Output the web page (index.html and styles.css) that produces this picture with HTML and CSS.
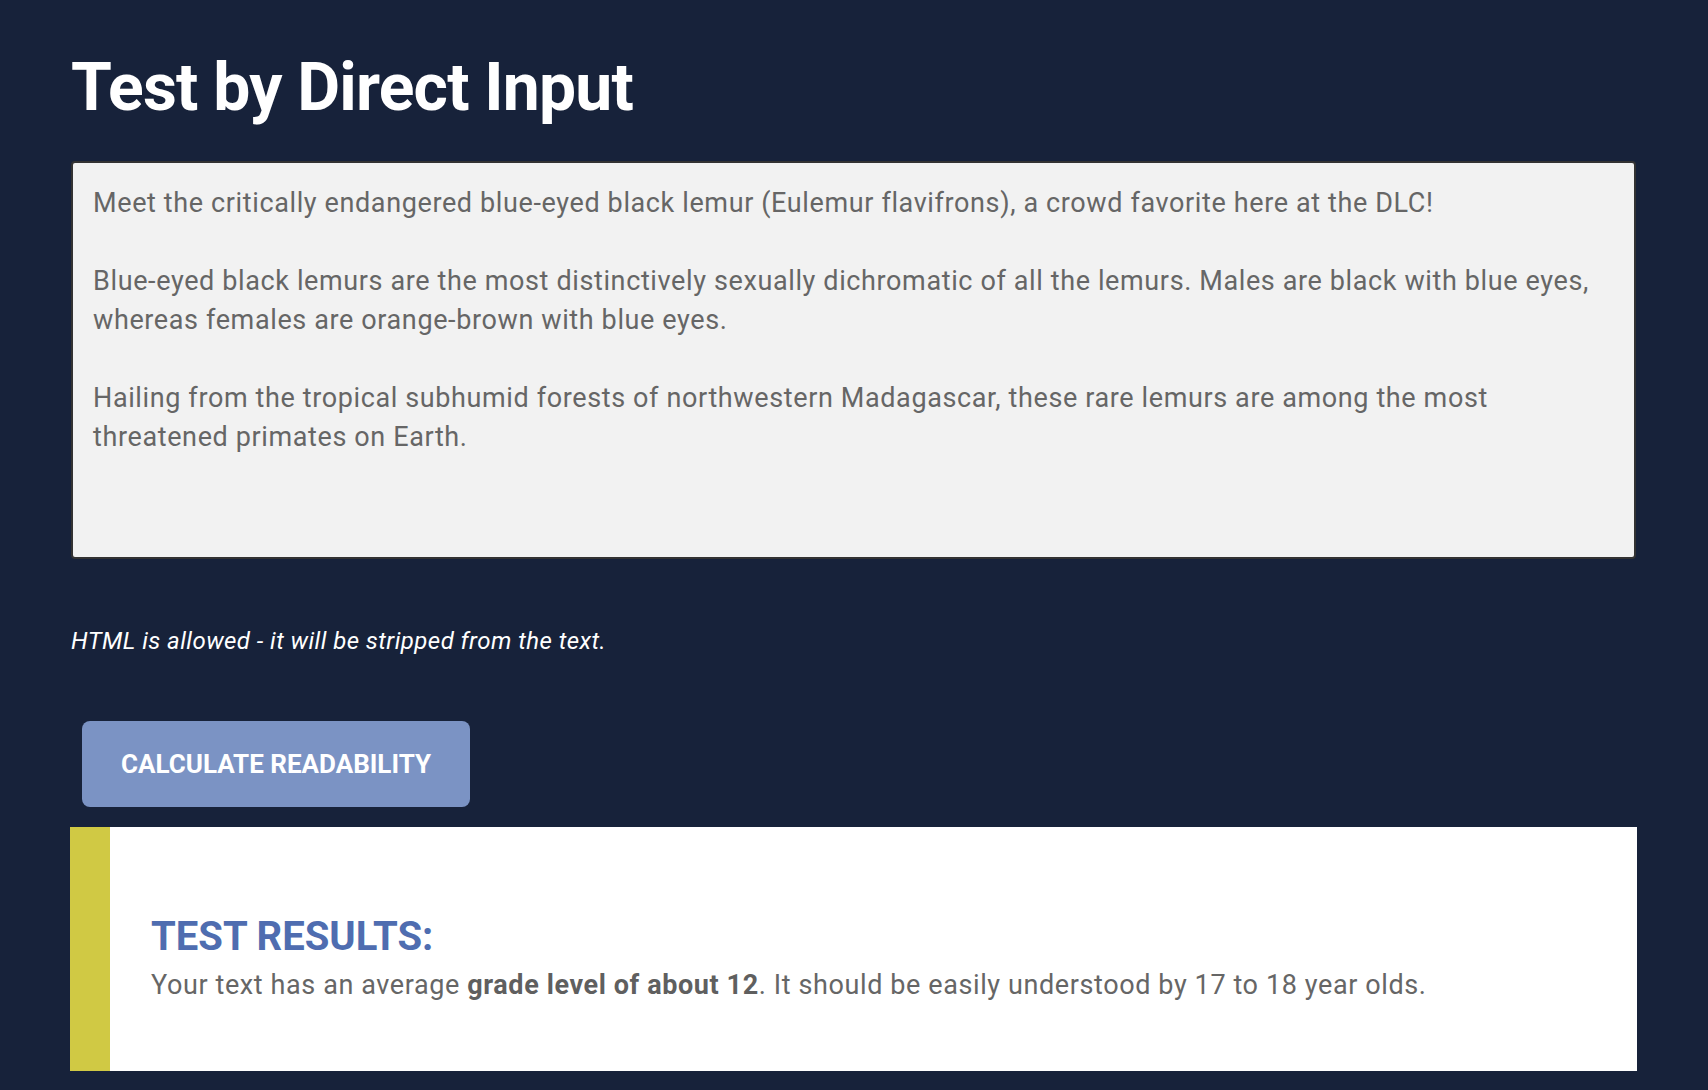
FILE: index.html
```html
<!DOCTYPE html>
<html lang="en">
<head>
<meta charset="utf-8">
<title>Test by Direct Input</title>
<link rel="stylesheet" href="styles.css">
</head>
<body>
<main class="page">
  <h1 class="title">Test by Direct Input</h1>
  <div class="input-box">
    <p>Meet the critically endangered blue-eyed black lemur (Eulemur flavifrons), a crowd favorite here at the DLC!</p>
    <p>Blue-eyed black lemurs are the most distinctively sexually dichromatic of all the lemurs. Males are black with blue eyes, whereas females are orange-brown with blue eyes.</p>
    <p>Hailing from the tropical subhumid forests of northwestern Madagascar, these rare lemurs are among the most threatened primates on Earth.</p>
  </div>
  <p class="note">HTML is allowed - it will be stripped from the text.</p>
  <div class="actions">
    <button class="calc-btn" type="button">Calculate Readability</button>
  </div>
  <section class="results">
    <div class="results-bar"></div>
    <div class="results-body">
      <h2 class="results-title">Test Results:</h2>
      <p class="results-text">Your text has an average <strong>grade level of about 12</strong>. It should be easily understood by 17 to 18 year olds.</p>
    </div>
  </section>
</main>
</body>
</html>
```

FILE: styles.css
```css
html, body {
  margin: 0;
  padding: 0;
}

body {
  background: #17223a;
  font-family: Roboto, "Noto Sans", "Liberation Sans", sans-serif;
  height: 1090px;
  overflow: hidden;
}

.page {
  display: flex;
  flex-direction: column;
  margin-left: 71px;
  width: 1565px;
  padding-top: 48px;
}

.title {
  margin: 0;
  font-size: 66px;
  line-height: 79px;
  font-weight: 700;
  letter-spacing: -0.8px;
  color: #ffffff;
}

.input-box {
  margin-top: 34px;
  height: 398px;
  box-sizing: border-box;
  background: #f2f2f2;
  border: 2px solid #333333;
  border-radius: 4px;
  padding: 21px 20px 19px 20px;
  color: #666666;
  font-size: 27px;
  line-height: 39px;
  letter-spacing: 0.62px;
}

.input-box p {
  margin: 0 0 39px 0;
}

.input-box p:last-child {
  margin-bottom: 0;
}

.note {
  margin: 66px 0 0 0;
  font-size: 24px;
  line-height: 33px;
  font-style: italic;
  letter-spacing: 0.45px;
  color: #ffffff;
}

.actions {
  display: flex;
  margin-top: 63px;
  padding-left: 11px;
}

.calc-btn {
  height: 86px;
  padding: 0 39px;
  border: none;
  border-radius: 8px;
  background: #7b93c4;
  color: #ffffff;
  font-family: Roboto, "Noto Sans", "Liberation Sans", sans-serif;
  font-weight: 700;
  font-size: 26px;
  text-transform: uppercase;
}

.results {
  display: flex;
  margin: 20px -1px 0 -1px;
  height: 244px;
  background: #ffffff;
}

.results-bar {
  width: 40px;
  flex: none;
  background: #d0c944;
}

.results-body {
  padding: 88px 40px 0 41px;
}

.results-title {
  margin: 0;
  font-size: 40px;
  line-height: 44px;
  font-weight: 700;
  color: #4f6db0;
  text-transform: uppercase;
}

.results-text {
  margin: 7px 0 0 0;
  font-size: 27px;
  line-height: 39px;
  letter-spacing: 0.6px;
  color: #666666;
}

.results-text strong {
  font-weight: 700;
  color: #5f5f5f;
}
```
